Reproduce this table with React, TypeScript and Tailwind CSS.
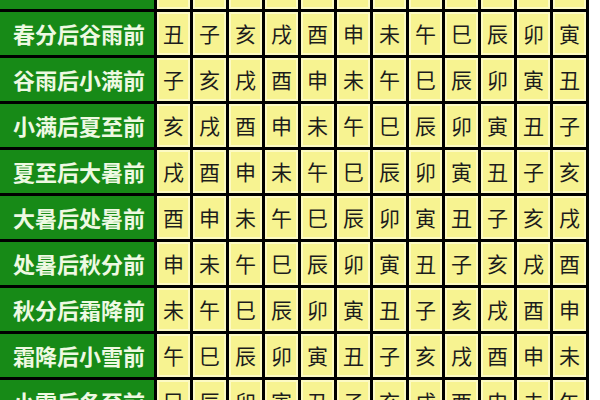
import React from 'react';

const rows: { label: string; cells: string }[] = [
  { label: '雨水后春分前', cells: '寅丑子亥戌酉申未午巳辰卯' },
  { label: '春分后谷雨前', cells: '丑子亥戌酉申未午巳辰卯寅' },
  { label: '谷雨后小满前', cells: '子亥戌酉申未午巳辰卯寅丑' },
  { label: '小满后夏至前', cells: '亥戌酉申未午巳辰卯寅丑子' },
  { label: '夏至后大暑前', cells: '戌酉申未午巳辰卯寅丑子亥' },
  { label: '大暑后处暑前', cells: '酉申未午巳辰卯寅丑子亥戌' },
  { label: '处暑后秋分前', cells: '申未午巳辰卯寅丑子亥戌酉' },
  { label: '秋分后霜降前', cells: '未午巳辰卯寅丑子亥戌酉申' },
  { label: '霜降后小雪前', cells: '午巳辰卯寅丑子亥戌酉申未' },
  { label: '小雪后冬至前', cells: '巳辰卯寅丑子亥戌酉申未午' },
];

const App: React.FC = () => {
  return (
    <div
      className="w-[600px] h-[400px] overflow-hidden bg-white"
      style={{ fontFamily: '"Noto Sans CJK SC", "Noto Sans", sans-serif' }}
    >
      <div className="-mt-[34px] w-[589px] bg-black pr-[3px] grid grid-cols-[154px_repeat(12,33px)] auto-rows-[43px] gap-[3px]">
        {rows.map((row) => (
          <React.Fragment key={row.label}>
            <div className="bg-[#178a17] flex items-center justify-center pl-[4px] text-[22px] font-bold text-[#eef9e2]">
              {row.label}
            </div>
            {Array.from(row.cells).map((c, i) => (
              <div
                key={i}
                className="bg-[#f7f391] border-2 border-[#fcfac4] flex items-center justify-center text-[21px] text-[#1c1c1c]"
              >
                {c}
              </div>
            ))}
          </React.Fragment>
        ))}
      </div>
    </div>
  );
};

export default App;
